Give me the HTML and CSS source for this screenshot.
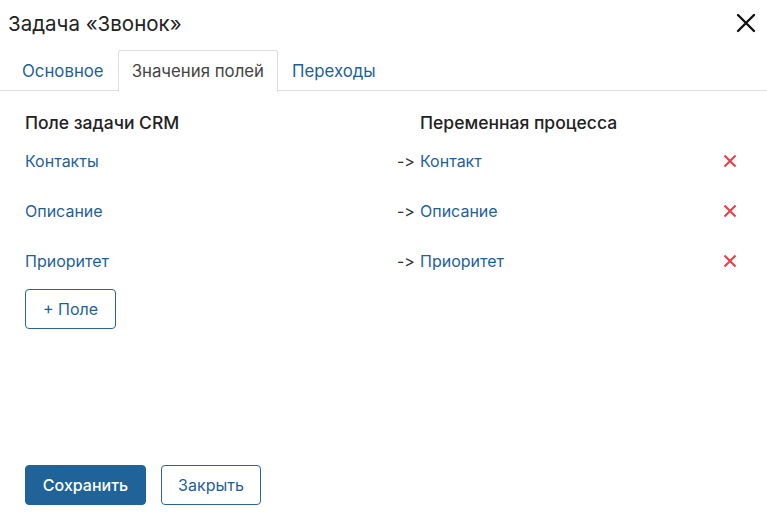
FILE: index.html
```html
<!DOCTYPE html>
<html lang="ru">
<head>
<meta charset="utf-8">
<link rel="stylesheet" href="styles.css">
</head>
<body>
<div class="dialog">
  <div class="header">
    <div class="title">Задача «Звонок»</div>
    <svg class="close" width="20" height="20" viewBox="0 0 20 20"><path d="M2 2 L18 18 M18 2 L2 18" stroke="#111" stroke-width="2.4" stroke-linecap="round" fill="none"/></svg>
  </div>
  <div class="tabs">
    <div class="tab">Основное</div>
    <div class="tab active">Значения полей</div>
    <div class="tab">Переходы</div>
  </div>
  <div class="content">
    <div class="row head">
      <div class="col-left">Поле задачи CRM</div>
      <div class="arrow"></div>
      <div class="col-right">Переменная процесса</div>
      <div class="del"></div>
    </div>
    <div class="row">
      <div class="col-left link">Контакты</div>
      <div class="arrow">-&gt;</div>
      <div class="col-right link">Контакт</div>
      <div class="del"><svg width="14" height="14" viewBox="0 0 14 14"><path d="M1.5 1.5 L12.5 12.5 M12.5 1.5 L1.5 12.5" stroke="#ee3b44" stroke-width="2" fill="none"/></svg></div>
    </div>
    <div class="row">
      <div class="col-left link">Описание</div>
      <div class="arrow">-&gt;</div>
      <div class="col-right link">Описание</div>
      <div class="del"><svg width="14" height="14" viewBox="0 0 14 14"><path d="M1.5 1.5 L12.5 12.5 M12.5 1.5 L1.5 12.5" stroke="#ee3b44" stroke-width="2" fill="none"/></svg></div>
    </div>
    <div class="row">
      <div class="col-left link">Приоритет</div>
      <div class="arrow">-&gt;</div>
      <div class="col-right link">Приоритет</div>
      <div class="del"><svg width="14" height="14" viewBox="0 0 14 14"><path d="M1.5 1.5 L12.5 12.5 M12.5 1.5 L1.5 12.5" stroke="#ee3b44" stroke-width="2" fill="none"/></svg></div>
    </div>
    <button class="btn btn-outline add">+ Поле</button>
  </div>
  <div class="footer">
    <button class="btn btn-primary save">Сохранить</button>
    <button class="btn btn-outline closebtn">Закрыть</button>
  </div>
</div>
</body>
</html>
```
FILE: styles.css
```css
* { box-sizing: border-box; }
html, body { margin: 0; padding: 0; background: #fff; }
body {
  font-family: Inter, "Noto Sans", sans-serif;
  font-size: 16px;
  color: #333;
  font-feature-settings: "calt" 0;
  font-variant-ligatures: none;
}
.dialog {
  height: 516px;
  display: flex;
  flex-direction: column;
}
.header {
  display: flex;
  align-items: center;
  justify-content: space-between;
  height: 46px;
  padding: 0 11px 0 8px;
}
.title {
  font-size: 20.5px;
  color: #222;
}
.close { display: block; }
.tabs {
  display: flex;
  padding-left: 8px;
  margin-top: 4px;
  border-bottom: 1px solid #ddd;
  height: 41px;
}
.tab {
  padding: 0 13px;
  height: 41px;
  line-height: 41px;
  font-size: 16.8px;
  color: #1f5f99;
  border: 1px solid transparent;
  border-bottom: none;
  border-radius: 3px 3px 0 0;
}
.tab.active {
  color: #444;
  border-color: #ddd;
  background: #fff;
  height: 42px;
}
.content {
  padding: 17px 25px 0 25px;
  flex: 1;
}
.row {
  display: flex;
  align-items: center;
  height: 50px;
}
.row.head {
  height: 28px;
  font-size: 17.5px;
  font-weight: 500;
  color: #222;
}
.col-left { width: 372px; }
.arrow { width: 23px; color: #333; }
.col-right { flex: 1; }
.del { width: 19px; display: flex; align-items: center; }
.link { color: #1f5f99; }
.btn {
  font-family: inherit;
  font-size: 16px;
  height: 40px;
  border-radius: 4px;
  cursor: pointer;
}
.btn-outline {
  background: #fff;
  border: 1px solid #2a6496;
  color: #1f5f99;
}
.btn-primary {
  background: #1f6399;
  border: 1px solid #1f6399;
  color: #fff;
  font-weight: 500;
}
.add { width: 91px; margin-top: 3px; }
.footer {
  display: flex;
  gap: 15px;
  padding: 0 25px 11px 25px;
}
.save { width: 121px; }
.closebtn { width: 100px; }
```
